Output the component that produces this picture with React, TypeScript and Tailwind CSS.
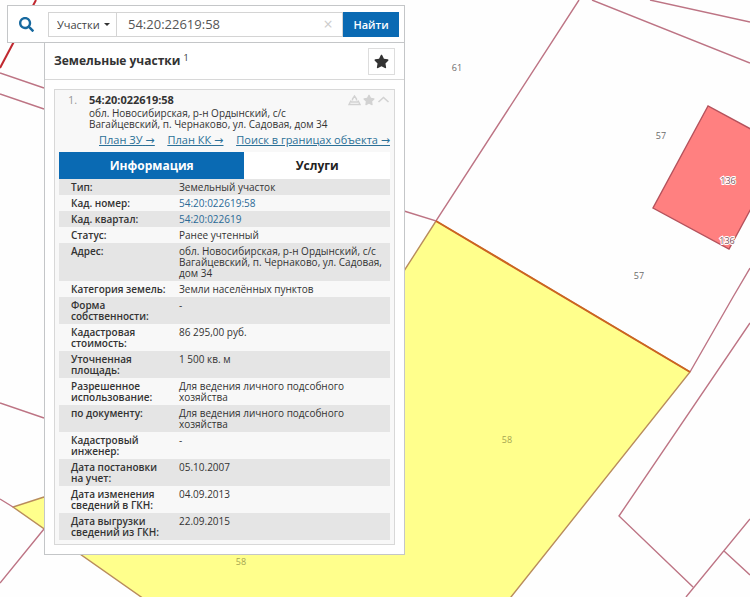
import { useState } from "react";
import { FaSearch, FaStar } from "react-icons/fa";

type Row = {
  label: string;
  value: string;
  href?: string;
};

const rows: Row[] = [
  { label: "Тип:", value: "Земельный участок" },
  { label: "Кад. номер:", value: "54:20:022619:58", href: "#parcel" },
  { label: "Кад. квартал:", value: "54:20:022619", href: "#quarter" },
  { label: "Статус:", value: "Ранее учтенный" },
  {
    label: "Адрес:",
    value:
      "обл. Новосибирская, р-н Ордынский, с/с Вагайцевский, п. Чернаково, ул. Садовая, дом 34",
  },
  { label: "Категория земель:", value: "Земли населённых пунктов" },
  { label: "Форма собственности:", value: "-" },
  { label: "Кадастровая стоимость:", value: "86 295,00 руб." },
  { label: "Уточненная площадь:", value: "1 500 кв. м" },
  {
    label: "Разрешенное использование:",
    value: "Для ведения личного подсобного хозяйства",
  },
  {
    label: "по документу:",
    value: "Для ведения личного подсобного хозяйства",
  },
  { label: "Кадастровый инженер:", value: "-" },
  { label: "Дата постановки на\u00a0учет:", value: "05.10.2007" },
  { label: "Дата изменения сведений в ГКН:", value: "04.09.2013" },
  { label: "Дата выгрузки сведений из ГКН:", value: "22.09.2015" },
];

const links = [
  { href: "#plan-zu", label: "План ЗУ" },
  { href: "#plan-kk", label: "План КК" },
  { href: "#search", label: "Поиск в границах объекта" },
];

const Map = () => (
  <svg
    className="absolute inset-0 h-full w-full"
    viewBox="0 0 750 597"
    preserveAspectRatio="xMinYMin slice"
    fill="none"
    stroke="#bd7484"
    strokeWidth="1.4"
    aria-hidden="true"
  >
    <path
      d="M436 221L690 372L511 597L504 606H154L13 507L44 497L404 271Z"
      fill="#ffff8c"
      stroke="#b98c5c"
    />
    <path d="M36 0L0 68" stroke="#c0282f" strokeWidth="2" />
    <path d="M0 73L44 88M0 94L44 109M0 403L44 418" />
    <path d="M0 499L13 507M44 529L0 583" />
    <path d="M579 0L436 221L404 211" />
    <path d="M592 0L750 63M650 0L750 22" />
    <path d="M750 268L733 297L690 372" />
    <path d="M750 323L619 516L693 587M750 519L686 597M724 551L750 575" />
    <path d="M436 221L690 372" stroke="#cc6420" strokeWidth="2" />
    <path
      d="M708 106L653 208L729 249L760 192V134Z"
      fill="#ff8080"
      stroke="#b5525c"
    />
    <g
      className="font-['Open_Sans',sans-serif] text-[9px]"
      stroke="none"
      fill="#6b6b6b"
      textAnchor="middle"
    >
      <text x="457" y="71">61</text>
      <text x="661" y="139">57</text>
      <text x="639" y="279">57</text>
      <g fill="#a5a552">
        <text x="507" y="443">58</text>
        <text x="241" y="565">58</text>
      </g>
      <g stroke="#ffffff" strokeWidth="2" paintOrder="stroke" fill="#805058">
        <text x="728" y="184">136</text>
        <text x="727" y="244">136</text>
      </g>
    </g>
  </svg>
);

const SearchBar = () => {
  const [query, setQuery] = useState("54:20:22619:58");

  return (
    <form
      className="flex h-[38px] items-center border border-[#c4c6c8] bg-white pr-[5px]"
      onSubmit={(e) => e.preventDefault()}
    >
      <button
        type="submit"
        aria-label="Поиск"
        className="flex h-full w-[40px] items-center justify-center pr-1 text-[#17699f]"
      >
        <FaSearch size={15} />
      </button>
      <div className="flex h-[25px] flex-1 items-center border border-[#d4d4d4]">
        <div className="relative h-full w-[68px] border-r border-[#d4d4d4]">
          <select
            aria-label="Тип объекта"
            className="block h-full w-full appearance-none pl-2 text-[11px] leading-none text-[#444]"
          >
            <option>Участки</option>
          </select>
          <span className="pointer-events-none absolute top-[10px] right-[6px] border-x-3 border-t-3 border-x-transparent border-t-[#333]" />
        </div>
        <input
          aria-label="Кадастровый номер"
          className="h-full min-w-0 flex-1 pl-[11px] text-[13px] text-[#555] outline-none"
          value={query}
          onChange={(e) => setQuery(e.target.value)}
        />
        <button
          type="button"
          aria-label="Очистить"
          className="w-7 text-[16px] leading-none text-[#ccc]"
          onClick={() => setQuery("")}
        >
          ×
        </button>
      </div>
      <button
        type="submit"
        className="h-[25px] w-[56px] bg-[#0a6ab3] text-[11px] leading-none font-semibold text-white"
      >
        Найти
      </button>
    </form>
  );
};

const ParcelCard = () => (
  <article className="border border-[#d8d8d8] bg-[#f8f8f8] px-1 pb-1 text-[10px] leading-[11px] text-[#333]">
    <div className="flex pt-[2px] pl-[9px]">
      <span className="w-[21px] text-[11px] leading-[16px] text-[#999]">
        1.
      </span>
      <div className="flex-1">
        <div className="flex items-center justify-between">
          <h2 className="text-[11px] leading-[16px] font-bold">
            54:20:022619:58
          </h2>
          <div className="flex items-center gap-[2px] text-[#d2d2d2]">
            <svg
              width="13"
              height="12"
              viewBox="0 0 13 12"
              fill="none"
              stroke="currentColor"
              strokeWidth="1.4"
            >
              <path d="M4.5 6.5V5L6.5 2L8.5 5V6.5M3 6.5L1 10.5H12L10 6.5M3 8H10" />
            </svg>
            <FaStar size={12} />
            <svg
              width="13"
              height="12"
              viewBox="0 0 13 12"
              fill="none"
              stroke="currentColor"
              strokeWidth="1.6"
            >
              <path d="M1.5 8L6.5 3.5L11.5 8" />
            </svg>
          </div>
        </div>
        <p className="max-w-[240px]">
          обл. Новосибирская, р-н Ордынский, с/с Вагайцевский, п. Чернаково,
          ул. Садовая, дом 34
        </p>
      </div>
    </div>
    <nav className="flex justify-end gap-[13px] pt-[2px] pb-[4px] text-[11px] leading-[15px] whitespace-nowrap text-[#2b7097] underline">
      {links.map((link) => (
        <a key={link.href} href={link.href}>
          {link.label} <span className="font-['DejaVu_Sans',sans-serif]">→</span>
        </a>
      ))}
    </nav>
    <div role="tablist" className="flex h-[27px] text-[12px] font-bold">
      <button
        role="tab"
        aria-selected="true"
        className="w-[56%] bg-[#0a6ab3] text-white"
      >
        Информация
      </button>
      <button
        role="tab"
        aria-selected="false"
        className="flex-1 bg-white text-[#222]"
      >
        Услуги
      </button>
    </div>
    <table className="w-full table-fixed">
      <colgroup>
        <col className="w-[108px]" />
        <col />
      </colgroup>
      <tbody>
        {rows.map((row) => (
          <tr key={row.label} className="odd:bg-[#e5e5e5]">
            <th
              scope="row"
              className="pt-[3px] pb-[2px] pl-3 text-left align-top font-semibold"
            >
              {row.label}
            </th>
            <td className="pt-[3px] pr-1 pb-[2px] pl-3 align-top">
              {row.href ? (
                <a href={row.href} className="text-[#2b6a96]">
                  {row.value}
                </a>
              ) : (
                row.value
              )}
            </td>
          </tr>
        ))}
      </tbody>
    </table>
  </article>
);

const App = () => (
  <main className="relative min-h-screen overflow-hidden bg-[#fefefe] font-['Open_Sans',sans-serif]">
    <Map />
    <div className="relative max-w-[405px] pt-[5px] pl-[7px]">
      <SearchBar />
      <section className="ml-[37px] border border-t-0 border-[#c4c6c8] bg-white">
        <header className="flex h-[37px] items-center justify-between border-b border-[#d8d8d8] px-[9px]">
          <h1 className="text-[12px] leading-[20px] font-bold text-[#333]">
            Земельные участки <sup className="text-[9px] font-normal">1</sup>
          </h1>
          <button
            type="button"
            aria-label="Избранное"
            className="flex size-[27px] items-center justify-center border border-[#ddd] text-[#333]"
          >
            <FaStar size={15} />
          </button>
        </header>
        <div className="p-[9px]">
          <ParcelCard />
        </div>
      </section>
    </div>
  </main>
);

export default App;
